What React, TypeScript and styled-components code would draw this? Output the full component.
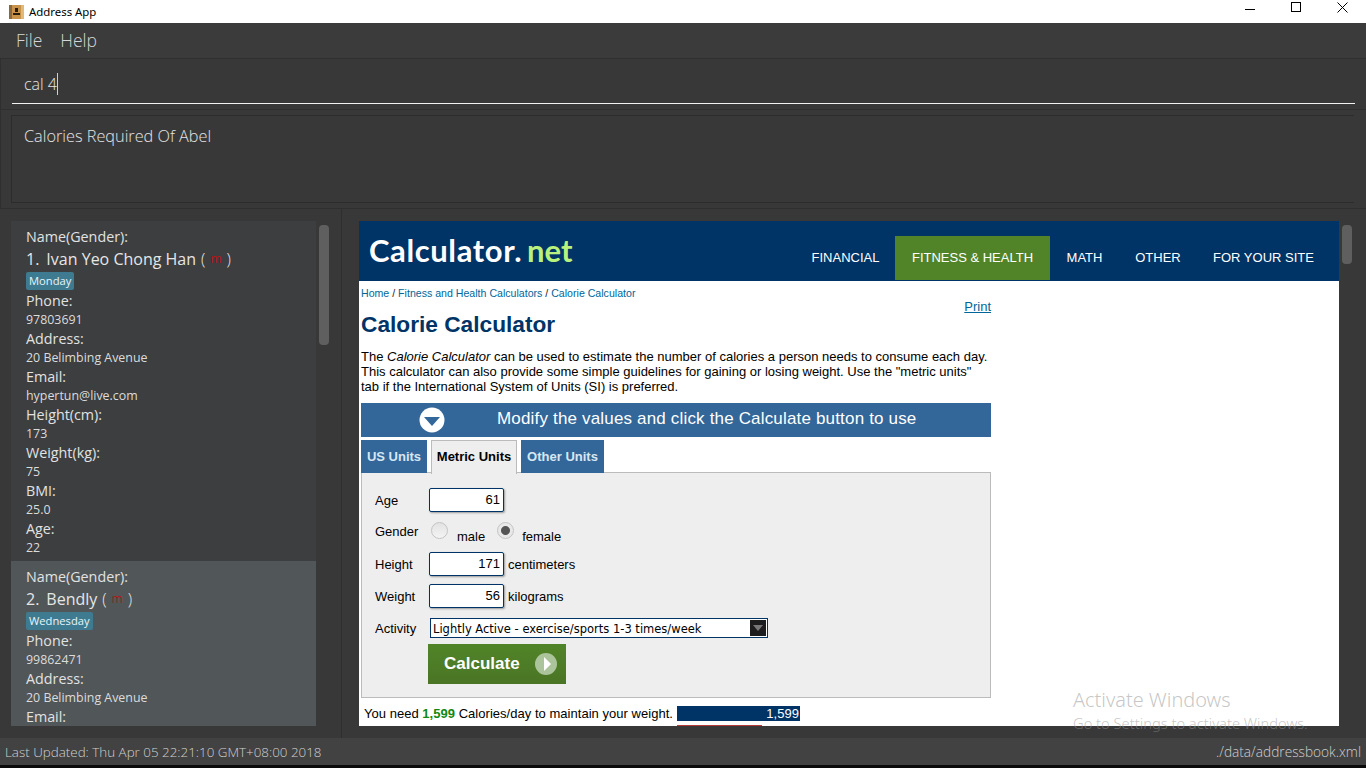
import React from 'react';
import styled, { createGlobalStyle } from 'styled-components';

interface IPerson {
  index: number;
  name: string;
  day: string;
  phone: string;
  address: string;
  email: string;
  height: string;
  weight: string;
  bmi: string;
  age: string;
}

const people: IPerson[] = [
  {
    index: 1,
    name: 'Ivan Yeo Chong Han',
    day: 'Monday',
    phone: '97803691',
    address: '20 Belimbing Avenue',
    email: 'hypertun@live.com',
    height: '173',
    weight: '75',
    bmi: '25.0',
    age: '22',
  },
  {
    index: 2,
    name: 'Bendly',
    day: 'Wednesday',
    phone: '99862471',
    address: '20 Belimbing Avenue',
    email: 'bendly@live.com',
    height: '170',
    weight: '70',
    bmi: '24.2',
    age: '23',
  },
];

const GlobalStyle = createGlobalStyle`
  html, body {
    margin: 0;
    padding: 0;
    background: #383838;
    overflow: hidden;
  }

  * {
    box-sizing: border-box;
  }
`;

const Window = styled.div`
  position: relative;
  width: 1366px;
  height: 768px;
  display: flex;
  flex-direction: column;
  overflow: hidden;
  background: #383838;
  font-family: "Open Sans", "Noto Sans", sans-serif;
`;

const TitleBar = styled.div`
  height: 23px;
  flex: none;
  display: flex;
  align-items: center;
  background: #fff;
  color: #000;
  font-size: 11.4px;
  padding-left: 9px;
`;

const TitleText = styled.span`
  margin-left: 5px;
  flex: 1;
  font-family: "Noto Sans", sans-serif;
`;

const WinButton = styled.div`
  width: 46px;
  height: 23px;
  display: flex;
  align-items: center;
  justify-content: center;
  margin-bottom: 9px;
  margin-right: ${(p: { $right?: number }) => p.$right || 0}px;
`;

const MenuBar = styled.div`
  height: 36px;
  flex: none;
  display: flex;
  align-items: center;
  gap: 18px;
  padding: 0 0 1px 16px;
  background: #3b3b3b;
  border-bottom: 1px solid #2f2f2f;
  color: #d6d6d6;
  font-size: 17.5px;
  font-weight: 300;
`;

const CommandPane = styled.div`
  height: 51px;
  flex: none;
  position: relative;
  padding: 14px 11px 0 11px;
  border-bottom: 1px solid #2f2f2f;
  border-left: 1px solid #2f2f2f;
`;

const CommandInput = styled.div`
  height: 31px;
  padding-left: 12px;
  border-bottom: 1px solid #f2f2f2;
  color: #e4e4e4;
  font-size: 16px;
  font-weight: 300;
  line-height: 22px;
`;

const Caret = styled.span`
  display: inline-block;
  width: 1px;
  height: 22px;
  background: #d0d0d0;
  vertical-align: top;
`;

const ResultPane = styled.div`
  height: 99px;
  flex: none;
  padding: 5px 12px 5px 10px;
  border-bottom: 1px solid #2f2f2f;
  border-left: 1px solid #2f2f2f;
`;

const ResultBox = styled.div`
  height: 88px;
  padding: 8px 12px;
  border: 1px solid #2c2c2c;
  border-right: none;
  color: #e4e4e4;
  font-size: 16.3px;
  font-weight: 300;
  line-height: 24px;
`;

const Main = styled.div`
  flex: 1;
  min-height: 0;
  display: flex;
`;

const ListPane = styled.div`
  width: 342px;
  flex: none;
  display: flex;
  padding: 12px 0 12px 11px;
  border-right: 1px solid #2e2e2e;
`;

const List = styled.div`
  width: 305px;
  flex: none;
  overflow: hidden;
`;

const Thumb = styled.div<{ $height: number }>`
  width: 10px;
  height: ${(p) => p.$height}px;
  margin-top: 4px;
  flex: none;
  border-radius: 4px;
  background: #5f5f5f;
`;

const ListThumb = styled(Thumb)`
  margin-left: 3px;
`;

const Card = styled.div<{ $selected?: boolean }>`
  height: 340px;
  padding: 6px 15px 0;
  background: ${(p) => (p.$selected ? '#515658' : '#3c3e3f')};
`;

const Label = styled.div`
  height: 19px;
  color: #e2e2e2;
  font-size: 14.3px;
  font-weight: 500;
  line-height: 19px;
`;

const Value = styled.div`
  height: 19px;
  color: #dcdcdc;
  font-size: 12.4px;
  line-height: 19px;
`;

const NameLine = styled.div`
  height: 26px;
  display: flex;
  color: #e6e6e6;
  font-size: 16px;
  font-weight: 500;
  line-height: 26px;
  white-space: pre;
`;

const NameText = styled.span`
  margin-left: 7px;
  margin-right: 5px;
`;

const Gender = styled.span`
  margin: 0 5px;
  color: #b81414;
  font-size: 12px;
  font-weight: 400;
`;

const Paren = styled.span`
  font-weight: 300;
`;

const Tag = styled.div`
  display: table;
  height: 18px;
  margin-bottom: 1px;
  padding: 0 3px;
  border-radius: 2px;
  background: #3e7b91;
  color: #e8f4f8;
  font-size: 11.2px;
  line-height: 18px;
`;

const BrowserPane = styled.div`
  flex: 1;
  min-width: 0;
  display: flex;
  padding: 12px 0 12px 17px;
`;

const Browser = styled.div`
  width: 980px;
  flex: none;
  overflow: hidden;
  background: #fff;
  color: #000;
  font-family: "Liberation Sans", Arial, sans-serif;
`;

const SiteHeader = styled.div`
  height: 60px;
  display: flex;
  align-items: flex-end;
  padding-bottom: 1px;
  padding-right: 9px;
  background: #003366;
`;

const Logo = styled.div`
  margin: 0 auto 2px 10px;
  align-self: center;
  color: #fff;
  font-family: Lato, Roboto, sans-serif;
  font-size: 31px;
  font-weight: 700;
  letter-spacing: 0.6px;
  line-height: 36px;
`;

const LogoNet = styled.span`
  margin-left: 5px;
  letter-spacing: 0;
  color: #b8f27c;
`;

const NavItem = styled.div<{ $active?: boolean; $width: number }>`
  width: ${(p) => p.$width}px;
  height: 44px;
  text-align: center;
  color: #fff;
  font-size: 13px;
  line-height: 43px;
  background: ${(p) => (p.$active ? '#518428' : 'transparent')};
`;

const Content = styled.div`
  width: 632px;
  padding-left: 2px;
`;

const Crumbs = styled.div`
  height: 13px;
  margin-top: 6px;
  color: #222;
  font-size: 10.6px;
  line-height: 13px;
`;

const Link = styled.span`
  color: #006699;
`;

const PrintLink = styled.div`
  height: 14px;
  text-align: right;
  color: #006699;
  font-size: 13px;
  line-height: 14px;
  text-decoration: underline;
`;

const Heading = styled.h1`
  margin: -3px 0 0;
  height: 27px;
  color: #003366;
  font-size: 22.7px;
  font-weight: 700;
  line-height: 27px;
`;

const Intro = styled.p`
  margin: 11px 0 0;
  font-size: 13px;
  line-height: 15px;
  white-space: pre;
`;

const Banner = styled.div`
  height: 34px;
  margin-top: 9px;
  display: flex;
  align-items: center;
  padding-left: 58px;
  gap: 52px;
  background: #336699;
  color: #fff;
  font-size: 17px;
  letter-spacing: 0.17px;
`;

const BannerText = styled.span`
  margin-top: -2px;
`;

const Tabs = styled.div`
  height: 33px;
  margin-top: 3px;
  display: flex;
  gap: 4px;
`;

const Tab = styled.div<{ $active?: boolean; $width: number }>`
  width: ${(p) => p.$width}px;
  height: ${(p) => (p.$active ? 34 : 33)}px;
  position: relative;
  z-index: 1;
  text-align: center;
  font-size: 13px;
  font-weight: 700;
  line-height: ${(p) => (p.$active ? 32 : 33)}px;
  color: ${(p) => (p.$active ? '#000' : '#d8e6f2')};
  background: ${(p) => (p.$active ? '#eeeeee' : '#336699')};
  border: ${(p) => (p.$active ? '1px solid #bbb' : 'none')};
  border-bottom: none;
`;

const FormBox = styled.div`
  height: 226px;
  margin-top: -1px;
  padding: 15px 13px 0;
  background: #eeeeee;
  border: 1px solid #bbb;
  font-size: 13px;
`;

const FormRow = styled.div<{ $height: number }>`
  height: ${(p) => p.$height}px;
  display: flex;
  align-items: center;
`;

const FieldLabel = styled.div`
  width: 54px;
  flex: none;
  margin-top: ${(p: { $up?: boolean }) => (p.$up ? -2 : 0)}px;
`;

const NumberField = styled.div`
  width: 75px;
  height: 24px;
  margin-right: 4px;
  padding-right: 3px;
  text-align: right;
  line-height: 22px;
  background: #fff;
  border: 1px solid #003366;
  border-radius: 2px;
  box-shadow: 1px 1px 2px #999;
  font-size: 13px;
`;

const Radio = styled.span<{ $checked?: boolean }>`
  width: 17px;
  height: 17px;
  flex: none;
  margin-left: ${(p) => (p.$checked ? 12 : 2)}px;
  margin-top: -4px;
  border-radius: 50%;
  border: 1px solid #c4c4c4;
  background: ${(p) =>
    p.$checked
      ? 'radial-gradient(circle, #555 0 4px, #e8e8e8 5px)'
      : 'linear-gradient(#e2e2e2, #f4f4f4)'};
`;

const RadioText = styled.span`
  margin: 8px 0 0 ${(p: { $left: number }) => p.$left}px;
`;

const Select = styled.div`
  width: 338px;
  height: 20px;
  margin-left: 1px;
  display: flex;
  align-items: center;
  justify-content: space-between;
  padding: 0 1px 0 2px;
  background: #fff;
  border: 1px solid #003366;
  font-family: "DejaVu Sans", sans-serif;
  font-size: 11.5px;
`;

const SelectValue = styled.span`
  margin-top: 2px;
`;

const SelectArrow = styled.span`
  width: 16px;
  height: 16px;
  display: flex;
  align-items: center;
  justify-content: center;
  background: #1d1d1d;
`;

const CalculateButton = styled.div`
  width: 138px;
  height: 40px;
  margin-left: 53px;
  margin-top: 4px;
  display: flex;
  align-items: center;
  justify-content: space-between;
  padding: 0 9px 0 16px;
  background: linear-gradient(#518428, #4a7525);
  color: #fff;
  font-size: 17px;
  font-weight: 700;
`;

const ResultLine = styled.div`
  height: 15px;
  margin-top: 8px;
  padding-left: 3px;
  display: flex;
  align-items: center;
  font-size: 13px;
  letter-spacing: 0.03px;
`;

const Green = styled.b`
  color: #118811;
`;

const ResultBar = styled.div`
  width: 123px;
  height: 15px;
  margin-left: auto;
  margin-right: 191px;
  padding-right: 1px;
  text-align: right;
  background: #003366;
  color: #fff;
  line-height: 15px;
`;

const NextBar = styled.div`
  width: 85px;
  height: 1px;
  margin: 4px 0 0 316px;
  background: #b33a3a;
`;

const BrowserThumbWrap = styled.div`
  margin-left: 3px;
`;

const StatusBar = styled.div`
  height: 27px;
  flex: none;
  display: flex;
  align-items: center;
  justify-content: space-between;
  padding: 0 5px;
  background: #424242;
  color: #d0d0d0;
  font-size: 13.4px;
  font-weight: 300;
`;

const StatusPath = styled.span`
  font-size: 13.7px;
`;

const BottomEdge = styled.div`
  height: 3px;
  flex: none;
  background: #0a0a0a;
`;

const Watermark = styled.div`
  position: absolute;
  left: 1073px;
  top: 688px;
  color: rgba(150, 150, 150, 0.55);
  font-family: "Noto Sans", sans-serif;
  font-weight: 300;
  pointer-events: none;
`;

const WatermarkTitle = styled.div`
  font-size: 19.9px;
  line-height: 24px;
`;

const WatermarkText = styled.div`
  font-size: 14.7px;
  line-height: 22px;
`;

const AppIcon = () => (
  <svg width="15" height="14" viewBox="0 0 15 14">
    <rect width="15" height="14" fill="#c8924a" />
    <rect x="0" y="0" width="3" height="14" fill="#8a6a3c" />
    <rect x="12" y="0" width="3" height="14" fill="#e0b878" />
    <path d="M6 3h3v4H6z M4 8h7v2H4z" fill="#2a1c10" />
  </svg>
);

const PersonCard: React.FC<{ person: IPerson; selected?: boolean }> = ({ person, selected }) => (
  <Card $selected={selected}>
    <Label>Name(Gender):</Label>
    <NameLine>
      {person.index}.
      <NameText>{person.name}</NameText>
      <Paren>(</Paren>
      <Gender>m</Gender>
      <Paren>)</Paren>
    </NameLine>
    <Tag>{person.day}</Tag>
    <Label>Phone:</Label>
    <Value>{person.phone}</Value>
    <Label>Address:</Label>
    <Value>{person.address}</Value>
    <Label>Email:</Label>
    <Value>{person.email}</Value>
    <Label>Height(cm):</Label>
    <Value>{person.height}</Value>
    <Label>Weight(kg):</Label>
    <Value>{person.weight}</Value>
    <Label>BMI:</Label>
    <Value>{person.bmi}</Value>
    <Label>Age:</Label>
    <Value>{person.age}</Value>
  </Card>
);

const App: React.FC = () => (
  <Window>
    <GlobalStyle />
    <TitleBar>
      <AppIcon />
      <TitleText>Address App</TitleText>
      <WinButton>
        <svg width="11" height="11" viewBox="0 0 11 11">
          <path d="M0 7.5h10" stroke="#000" />
        </svg>
      </WinButton>
      <WinButton>
        <svg width="11" height="11" viewBox="0 0 11 11">
          <rect x="0.5" y="0.5" width="9" height="9" fill="none" stroke="#000" />
        </svg>
      </WinButton>
      <WinButton $right={1}>
        <svg width="11" height="11" viewBox="0 0 11 11">
          <path d="M0.5 0.5l10 10M10.5 0.5l-10 10" stroke="#000" />
        </svg>
      </WinButton>
    </TitleBar>

    <MenuBar>
      <span>File</span>
      <span>Help</span>
    </MenuBar>

    <CommandPane>
      <CommandInput>
        cal 4
        <Caret />
      </CommandInput>
    </CommandPane>

    <ResultPane>
      <ResultBox>Calories Required Of Abel</ResultBox>
    </ResultPane>

    <Main>
      <ListPane>
        <List>
          <PersonCard person={people[0]} />
          <PersonCard person={people[1]} selected />
        </List>
        <ListThumb $height={120} />
      </ListPane>

      <BrowserPane>
        <Browser>
          <SiteHeader>
            <Logo>
              Calculator.<LogoNet>net</LogoNet>
            </Logo>
            <NavItem $width={99}>FINANCIAL</NavItem>
            <NavItem $width={155} $active>FITNESS &amp; HEALTH</NavItem>
            <NavItem $width={69}>MATH</NavItem>
            <NavItem $width={78}>OTHER</NavItem>
            <NavItem $width={133}>FOR YOUR SITE</NavItem>
          </SiteHeader>

          <Content>
            <Crumbs>
              <Link>Home</Link> / <Link>Fitness and Health Calculators</Link> / <Link>Calorie Calculator</Link>
            </Crumbs>
            <PrintLink>Print</PrintLink>
            <Heading>Calorie Calculator</Heading>
            <Intro>
              The <i>Calorie Calculator</i> can be used to estimate the number of calories a person needs to consume each day.
              {'\n'}This calculator can also provide some simple guidelines for gaining or losing weight. Use the "metric units"
              {'\n'}tab if the International System of Units (SI) is preferred.
            </Intro>

            <Banner>
              <svg width="26" height="26" viewBox="0 0 26 26">
                <circle cx="13" cy="13" r="12.5" fill="#fff" />
                <path d="M5 10h16l-8 9z" fill="#336699" />
              </svg>
              <BannerText>Modify the values and click the Calculate button to use</BannerText>
            </Banner>

            <Tabs>
              <Tab $width={66}>US Units</Tab>
              <Tab $width={86} $active>Metric Units</Tab>
              <Tab $width={83}>Other Units</Tab>
            </Tabs>

            <FormBox>
              <FormRow $height={24}>
                <FieldLabel>Age</FieldLabel>
                <NumberField>61</NumberField>
              </FormRow>
              <FormRow $height={40}>
                <FieldLabel $up>Gender</FieldLabel>
                <Radio />
                <RadioText $left={9}>male</RadioText>
                <Radio $checked />
                <RadioText $left={8}>female</RadioText>
              </FormRow>
              <FormRow $height={24}>
                <FieldLabel>Height</FieldLabel>
                <NumberField>171</NumberField>
                centimeters
              </FormRow>
              <FormRow $height={40}>
                <FieldLabel>Weight</FieldLabel>
                <NumberField>56</NumberField>
                kilograms
              </FormRow>
              <FormRow $height={24}>
                <FieldLabel>Activity</FieldLabel>
                <Select>
                  <SelectValue>Lightly Active - exercise/sports 1-3 times/week</SelectValue>
                  <SelectArrow>
                    <svg width="10" height="6" viewBox="0 0 10 6">
                      <path d="M0 0h10L5 6z" fill="#777" />
                    </svg>
                  </SelectArrow>
                </Select>
              </FormRow>
              <CalculateButton>
                Calculate
                <svg width="22" height="22" viewBox="0 0 22 22">
                  <circle cx="11" cy="11" r="11" fill="#acc49b" />
                  <path d="M9 4l7 7-7 7z" fill="#fff" />
                </svg>
              </CalculateButton>
            </FormBox>

            <ResultLine>
              You need&nbsp;<Green>1,599</Green>&nbsp;Calories/day to maintain your weight.
              <ResultBar>1,599</ResultBar>
            </ResultLine>
            <NextBar />
          </Content>
        </Browser>
        <BrowserThumbWrap>
          <Thumb $height={39} />
        </BrowserThumbWrap>
      </BrowserPane>
    </Main>

    <StatusBar>
      <span>Last Updated: Thu Apr 05 22:21:10 GMT+08:00 2018</span>
      <StatusPath>./data/addressbook.xml</StatusPath>
    </StatusBar>
    <BottomEdge />

    <Watermark>
      <WatermarkTitle>Activate Windows</WatermarkTitle>
      <WatermarkText>Go to Settings to activate Windows.</WatermarkText>
    </Watermark>
  </Window>
);

export default App;
